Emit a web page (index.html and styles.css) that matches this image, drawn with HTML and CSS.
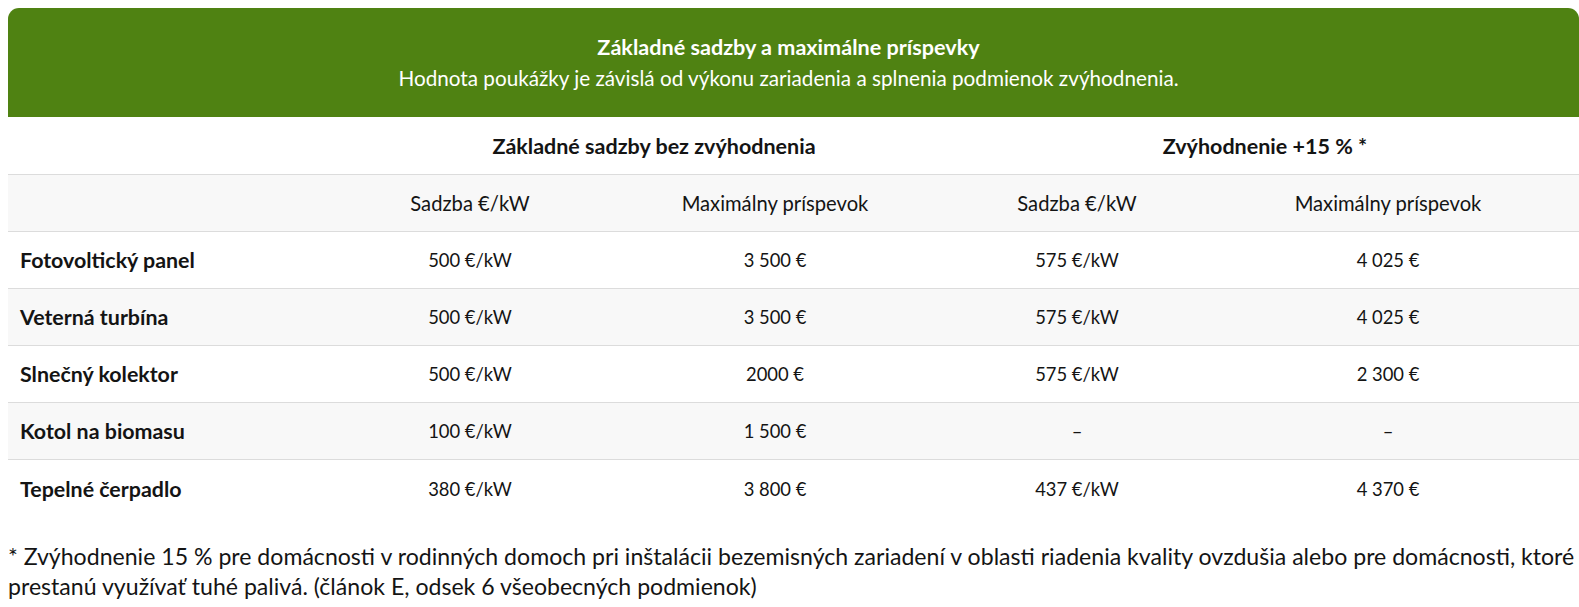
FILE: index.html
```html
<!DOCTYPE html>
<html lang="sk">
<head>
<meta charset="utf-8">
<title>Sadzby</title>
<link rel="stylesheet" href="styles.css">
</head>
<body>
<div class="wrap">
  <div class="banner">
    <div class="banner-title">Základné sadzby a maximálne príspevky</div>
    <div class="banner-sub">Hodnota poukážky je závislá od výkonu zariadenia a splnenia podmienok zvýhodnenia.</div>
  </div>
  <div class="rates" role="table">
    <div class="row group" role="row">
      <div class="cell" role="columnheader"></div>
      <div class="cell g g1" role="columnheader">Základné sadzby bez zvýhodnenia</div>
      <div class="cell g g2" role="columnheader">Zvýhodnenie +15 % *</div>
    </div>
    <div class="row sub shade" role="row">
      <div class="cell" role="columnheader"></div>
      <div class="cell" role="columnheader">Sadzba €/kW</div>
      <div class="cell" role="columnheader">Maximálny príspevok</div>
      <div class="cell" role="columnheader">Sadzba €/kW</div>
      <div class="cell" role="columnheader">Maximálny príspevok</div>
    </div>
    <div class="row" role="row">
      <div class="cell label" role="rowheader">Fotovoltický panel</div>
      <div class="cell num" role="cell">500 €/kW</div>
      <div class="cell num" role="cell">3 500 €</div>
      <div class="cell num" role="cell">575 €/kW</div>
      <div class="cell num" role="cell">4 025 €</div>
    </div>
    <div class="row shade" role="row">
      <div class="cell label" role="rowheader">Veterná turbína</div>
      <div class="cell num" role="cell">500 €/kW</div>
      <div class="cell num" role="cell">3 500 €</div>
      <div class="cell num" role="cell">575 €/kW</div>
      <div class="cell num" role="cell">4 025 €</div>
    </div>
    <div class="row" role="row">
      <div class="cell label" role="rowheader">Slnečný kolektor</div>
      <div class="cell num" role="cell">500 €/kW</div>
      <div class="cell num" role="cell">2000 €</div>
      <div class="cell num" role="cell">575 €/kW</div>
      <div class="cell num" role="cell">2 300 €</div>
    </div>
    <div class="row shade" role="row">
      <div class="cell label" role="rowheader">Kotol na biomasu</div>
      <div class="cell num" role="cell">100 €/kW</div>
      <div class="cell num" role="cell">1 500 €</div>
      <div class="cell num" role="cell">–</div>
      <div class="cell num" role="cell">–</div>
    </div>
    <div class="row last" role="row">
      <div class="cell label" role="rowheader">Tepelné čerpadlo</div>
      <div class="cell num" role="cell">380 €/kW</div>
      <div class="cell num" role="cell">3 800 €</div>
      <div class="cell num" role="cell">437 €/kW</div>
      <div class="cell num" role="cell">4 370 €</div>
    </div>
  </div>
  <p class="note">* Zvýhodnenie 15 % pre domácnosti v rodinných domoch pri inštalácii bezemisných zariadení v oblasti riadenia kvality ovzdušia alebo pre domácnosti, ktoré prestanú využívať tuhé palivá. (článok E, odsek 6 všeobecných podmienok)</p>
</div>
</body>
</html>
```
FILE: styles.css
```css
* { box-sizing: border-box; }
html, body { margin: 0; padding: 0; background: #fff; }
body {
  font-family: Lato, "Open Sans", "Noto Sans", sans-serif;
  color: #141414;
}
.wrap {
  padding: 8px 0 0 8px;
}
.banner {
  background: #4f8212;
  color: #fff;
  border-radius: 11px 11px 0 0;
  text-align: center;
  height: 109px;
  padding: 24px 10px 0 0;
}
.banner-title {
  font-weight: 700;
  font-size: 21.6px;
  line-height: 30px;
}
.banner-sub {
  font-size: 20.7px;
  line-height: 32px;
}
.rates {
  display: flex;
  flex-direction: column;
}
.row {
  display: grid;
  grid-template-columns: 310px 304px 306px 298px 324px 1fr;
  height: 57px;
  border-bottom: 1px solid #dcdcdc;
  align-items: center;
  font-size: 20.2px;
}
.row.group {
  height: 58px;
  font-weight: 700;
  font-size: 21.5px;
}
.row.last { border-bottom: none; height: 58px; }
.shade { background: #f8f8f8; }
.cell {
  text-align: center;
  white-space: nowrap;
}
.g1 { grid-column: 2 / span 2; padding-left: 62px; }
.g2 { grid-column: 4 / span 2; padding-left: 52px; }
.label {
  text-align: left;
  padding-left: 12px;
  font-weight: 700;
  font-size: 21.4px;
}
.num { font-size: 18.4px; }
.note {
  margin: 23px 0 0;
  font-size: 23.1px;
  line-height: 30px;
}
```
